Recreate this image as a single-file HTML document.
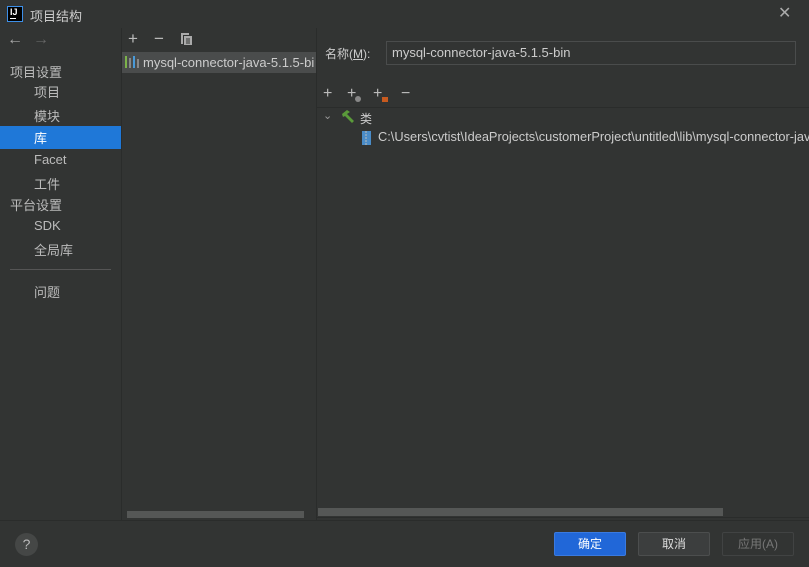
<!DOCTYPE html>
<html><head><meta charset="utf-8"><style>
*{margin:0;padding:0;box-sizing:border-box}
body{width:809px;height:567px;background:#323433;color:#bbbbbb;font-family:"Liberation Sans","Noto Sans CJK SC",sans-serif;font-size:12px;position:relative;overflow:hidden}
.a{position:absolute;white-space:nowrap}
.vd{position:absolute;width:1px;background:#2a2c2b}
</style></head><body>
<!-- title -->
<div class="a" style="left:7px;top:6px;width:16px;height:16px;border:1px solid #3d8fe8;background:#000"><div class="a" style="left:2px;top:0;color:#fff;font-size:9px;font-weight:bold">IJ</div><div class="a" style="left:2px;top:11px;width:6px;height:1px;background:#fff"></div></div>
<div class="a" style="left:30px;top:6px;font-size:13px;color:#ccc">项目结构</div>
<div class="a" style="left:778px;top:3px;font-size:16px;color:#aaa">✕</div>
<!-- nav arrows -->
<div class="a" style="left:7px;top:31px;font-size:16px;color:#aaa">←</div>
<div class="a" style="left:33px;top:31px;font-size:16px;color:#666">→</div>
<!-- sidebar -->
<div class="a" style="left:10px;top:62px;font-size:13px">项目设置</div>
<div class="a" style="left:34px;top:82px;font-size:13px">项目</div>
<div class="a" style="left:34px;top:106px;font-size:13px">模块</div>
<div class="a" style="left:0;top:126px;width:121px;height:23px;background:#1f78d8"></div>
<div class="a" style="left:34px;top:128px;font-size:13px;color:#fff">库</div>
<div class="a" style="left:34px;top:152px;font-size:13px">Facet</div>
<div class="a" style="left:34px;top:174px;font-size:13px">工件</div>
<div class="a" style="left:10px;top:195px;font-size:13px">平台设置</div>
<div class="a" style="left:34px;top:218px;font-size:13px">SDK</div>
<div class="a" style="left:34px;top:240px;font-size:13px">全局库</div>
<div class="a" style="left:10px;top:269px;width:101px;height:1px;background:#555"></div>
<div class="a" style="left:34px;top:282px;font-size:13px">问题</div>
<div class="vd" style="left:121px;top:28px;height:492px"></div>
<!-- middle -->
<div class="a" style="left:128px;top:29px;font-size:17px;color:#bbb">+</div>
<div class="a" style="left:154px;top:29px;font-size:17px;color:#bbb">−</div>
<svg class="a" style="left:180px;top:32px" width="13" height="14"><path d="M1 1h8v2H3v9H1z" fill="#aaa"/><rect x="4" y="4" width="8" height="9" fill="#aaa"/><path d="M6 7h4M6 9h4M6 11h4" stroke="#323433"/></svg>
<div class="a" style="left:122px;top:52px;width:194px;height:21px;background:#4a4c4c"></div>
<svg class="a" style="left:125px;top:56px" width="14" height="12"><rect x="0" y="0" width="2" height="12" fill="#7cb24a"/><rect x="4" y="2" width="2" height="10" fill="#888"/><rect x="8" y="0" width="2" height="12" fill="#4a9ad8"/><rect x="12" y="3" width="2" height="9" fill="#888"/></svg>
<div class="a" style="left:143px;top:55px;font-size:13px;color:#ccc;width:172px;overflow:hidden">mysql-connector-java-5.1.5-bin</div>
<div class="a" style="left:127px;top:511px;width:177px;height:7px;background:#555756"></div>
<div class="vd" style="left:316px;top:28px;height:492px"></div>
<!-- right -->
<div class="a" style="left:325px;top:45px;font-size:12px;color:#ccc">名称(<u>M</u>):</div>
<div class="a" style="left:386px;top:41px;width:410px;height:24px;border:1px solid #4a4c4c;background:#323433"></div>
<div class="a" style="left:392px;top:45px;font-size:13px;color:#ccc">mysql-connector-java-5.1.5-bin</div>
<div class="a" style="left:323px;top:85px;font-size:16px">+</div>
<div class="a" style="left:347px;top:85px;font-size:16px">+</div><div class="a" style="left:355px;top:96px;width:6px;height:6px;border-radius:3px;background:#888"></div>
<div class="a" style="left:373px;top:85px;font-size:16px">+</div><div class="a" style="left:382px;top:97px;width:6px;height:5px;background:#c75a1f"></div>
<div class="a" style="left:401px;top:85px;font-size:16px">−</div>
<div class="a" style="left:317px;top:107px;width:492px;height:1px;background:#2a2c2b"></div>
<div class="a" style="left:323px;top:109px;font-size:11px;color:#999">⌄</div>
<svg class="a" style="left:340px;top:109px" width="16" height="14"><path d="M2 5 L7 1 L10 3 L7 5 L14 12 L12 14 L5 7 L3 8 Z" fill="#5a9a3a"/></svg>
<div class="a" style="left:360px;top:110px;font-size:12px;color:#ccc">类</div>
<svg class="a" style="left:362px;top:131px" width="9" height="14"><rect x="0" y="0" width="9" height="14" fill="#4a8cc8"/><path d="M4 0v14" stroke="#bbb" stroke-dasharray="2 1"/></svg>
<div class="a" style="left:378px;top:129px;width:431px;overflow:hidden;font-size:12.8px;color:#ccc">C:\Users\cvtist\IdeaProjects\customerProject\untitled\lib\mysql-connector-java-5.1.5-bin.jar</div>
<div class="a" style="left:318px;top:508px;width:405px;height:8px;background:#555756"></div>
<div class="a" style="left:317px;top:517px;width:492px;height:1px;background:#2a2c2b"></div>
<div class="a" style="left:0;top:520px;width:809px;height:1px;background:#2a2c2b"></div>
<!-- bottom -->
<div class="a" style="left:15px;top:533px;width:23px;height:23px;border-radius:12px;background:#454746;color:#bbb;font-size:14px;text-align:center;line-height:23px">?</div>
<div class="a" style="left:554px;top:532px;width:72px;height:24px;background:#2167d8;border:1px solid #3a7ae0;border-radius:2px;color:#fff;text-align:center;line-height:22px;font-size:12px">确定</div>
<div class="a" style="left:638px;top:532px;width:72px;height:24px;background:#3c3e3e;border:1px solid #4c4e4e;border-radius:2px;color:#ddd;text-align:center;line-height:22px;font-size:12px">取消</div>
<div class="a" style="left:722px;top:532px;width:72px;height:24px;border:1px solid #414343;border-radius:2px;color:#777;text-align:center;line-height:22px;font-size:12px">应用(A)</div>
</body></html>
